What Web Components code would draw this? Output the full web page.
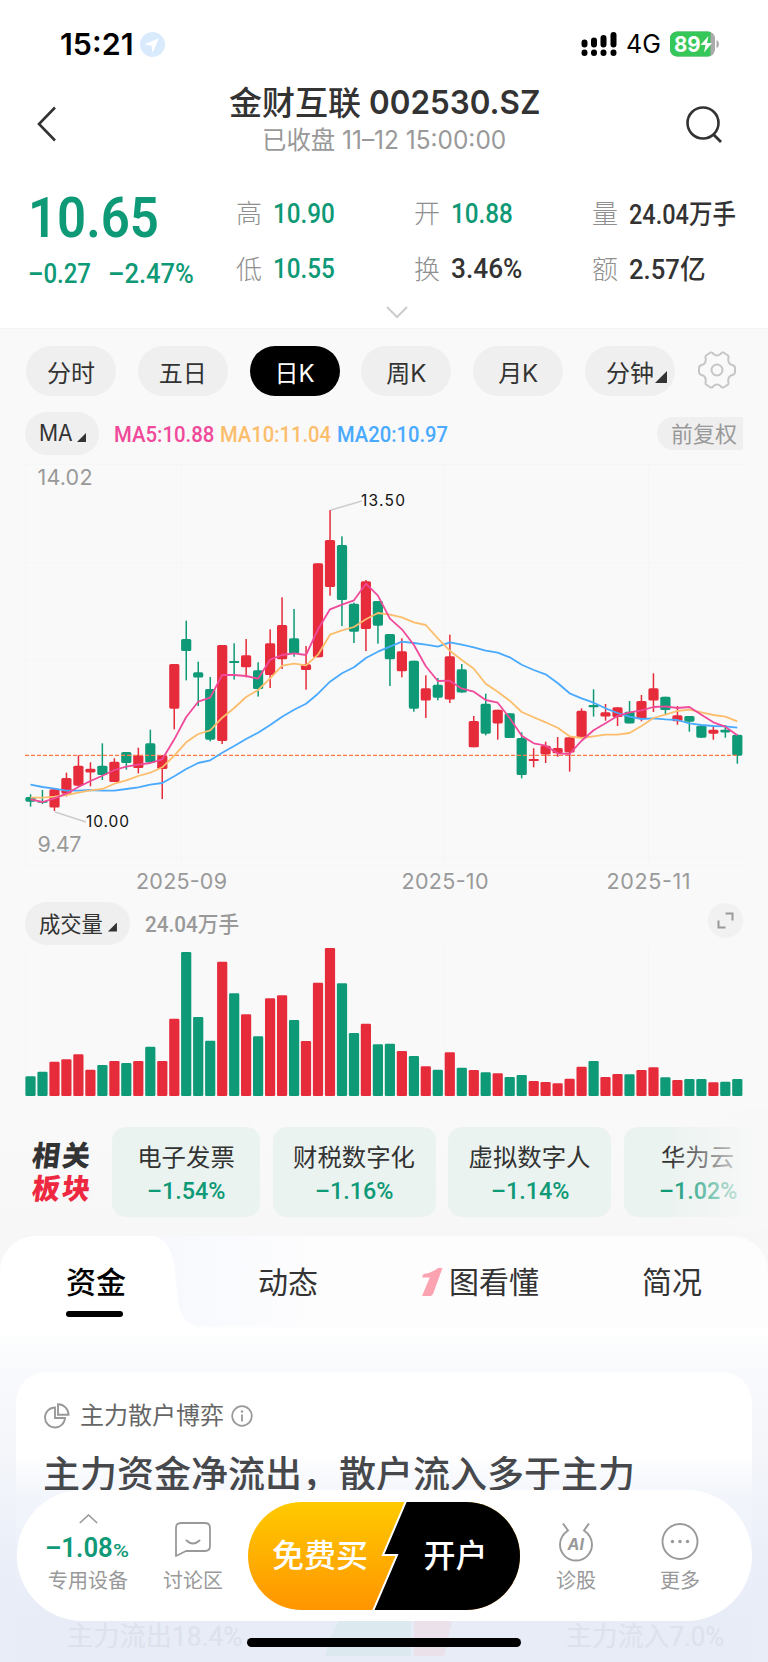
<!DOCTYPE html>
<html lang="zh-CN">
<head>
<meta charset="utf-8">
<title>金财互联 002530.SZ</title>
<style>
html,body{margin:0;padding:0}
body{width:768px;height:1662px;overflow:hidden;background:#f9f9f9;color:#333;font-family:Inter,"Noto Sans CJK SC",sans-serif;
--green:#0e9977;--red:#e62b3b;--grey:#999;--num:Roboto,"Noto Sans CJK SC",sans-serif}
</style>
</head>
<body>
<stock-page></stock-page>
<script>
const define=(name,css,html,setup)=>{
  const t=document.createElement('template');
  t.innerHTML='<style>:host{display:block;box-sizing:border-box}*{box-sizing:border-box}svg{display:block;flex:none}'+css+'</style>'+html;
  customElements.define(name,class extends HTMLElement{
    constructor(){super();this.attachShadow({mode:'open'}).append(t.content.cloneNode(true));}
    connectedCallback(){if(setup)setup(this.shadowRoot,this);}
  });
};

define('stock-page',':host{width:768px;height:1662px;position:relative;overflow:hidden}',`
<status-bar></status-bar>
<page-header></page-header>
<quote-panel></quote-panel>
<period-tabs></period-tabs>
<ma-legend></ma-legend>
<k-chart></k-chart>
<volume-chart></volume-chart>
<sector-list></sector-list>
<section-tabs></section-tabs>
<fund-card></fund-card>
<action-bar></action-bar>`);

define('status-bar',`
:host{height:84px;background:#fff;display:flex;align-items:center;padding:4px 49px 0 60px;color:#000}
.time{font-size:30px;font-weight:600}
.loc{margin-left:6px}
.right{margin-left:auto;display:flex;align-items:center}
.net{font-size:25px;margin:0 9px 0 8px}
.bat{position:relative;width:49px;height:26px}
.bat fit-text{position:absolute;left:4px;top:0;font-size:22px;line-height:26px;font-weight:700;color:#fff}`,`
<fit-text class="time" w="74">15:21</fit-text>
<svg class="loc" width="25" height="25" viewBox="0 0 25 25"><circle cx="12.5" cy="12.5" r="12.5" fill="#d9eafd"/><path d="M18.8 6.2L5.8 11.7c-.8.4-.7 1.2.2 1.3l5.7.4.4 5.7c.1.9.9 1 1.3.2z" fill="#fff"/></svg>
<div class="right">
<svg width="37" height="26" viewBox="0 0 37 26"><g stroke="#000" stroke-width="6" stroke-linecap="round"><path d="M3.5 11.5v2M13 9.500v4M22.500 7v6.500M32.500 4v9.500M3.500 21.500v.5M13 21.500v.5M22.500 21.500v.5M32.500 21.500v.5"/></g></svg>
<fit-text class="net" w="35">4G</fit-text>
<div class="bat"><svg width="49" height="26" viewBox="0 0 49 26"><defs><clipPath id="b"><rect width="45" height="25" y=".5" rx="7"/></clipPath></defs><g clip-path="url(#b)"><rect width="45" height="26" fill="#aaa"/><rect width="40.500" height="26" fill="#35c759"/></g><path d="M46.500 9q2.500 1 2.500 4t-2.500 4z" fill="#aaa"/><path d="M38.500 5l-8 9h5l-1.500 7.500 8-9.500h-5z" fill="#fff"/></svg><fit-text w="27">89</fit-text></div>
</div>`);

define('page-header',`
:host{height:96px;background:#fff;display:grid;grid-template-columns:100px 1fr 100px;padding-top:1px}
.back{margin:21px 0 0 36px}.search{margin:20px 0 0 17px}
.mid{text-align:center}
h1{margin:0;font-size:33px;line-height:36px;font-weight:500;padding-left:1px;display:flex;gap:8px;justify-content:center}
h1 fit-text+fit-text{font-weight:600;font-size:32.500px}
p{margin:2px 0 0;font-size:25px;line-height:34px;color:#999;font-weight:400}
`,`
<svg class="back" width="22" height="36" viewBox="0 0 22 36"><path d="M19 1.500L3 18l16 16.500" fill="none" stroke="#333" stroke-width="2.600"/></svg>
<div class="mid"><h1><fit-text w="132">金财互联</fit-text><fit-text w="171">002530.SZ</fit-text></h1><p><fit-text w="244">已收盘 11–12 15:00:00</fit-text></p></div>
<svg class="search" width="40" height="40" viewBox="0 0 40 40"><circle cx="18" cy="18" r="15.500" fill="none" stroke="#333" stroke-width="2.600"/><path d="M28.500 29.500L36 37" stroke="#333" stroke-width="2.800"/></svg>`);

define('quote-panel',`
:host{height:149px;background:#fff;border-bottom:1px solid #f3f3f3;font-family:var(--num)}
.g{display:grid;grid-template-columns:208px 178px 178px 1fr;grid-template-rows:66px 50px;padding-left:28px;align-items:center}
.big{font-size:56px;line-height:66px;font-weight:500;color:var(--green);height:66px;padding-top:5px}
.big fit-text{font-weight:600}
.chg{display:flex;gap:17px;font-size:27px;font-weight:500;color:var(--green);height:28px;align-items:center;margin-top:6px}
.c{display:flex;align-items:center;font-size:26px;color:#8f8f8f;font-weight:300}
.c>span{margin-top:-3px}
.c fit-text{font-size:27px;font-weight:500;margin-left:11px;color:#333;padding-top:1px}
.c .k{padding-top:0;margin-top:-2px}
.c .gr{color:var(--green)}
.r2{margin-top:-5px}
svg{margin:10px 0 0 386px}`,`
<div class="g">
<div class="big"><fit-text w="131">10.65</fit-text></div>
<div class="c"><span>高</span><fit-text class="gr" w="62">10.90</fit-text></div>
<div class="c"><span>开</span><fit-text class="gr" w="62">10.88</fit-text></div>
<div class="c"><span>量</span><fit-text class="k" w="107">24.04万手</fit-text></div>
<div class="chg"><fit-text w="63">–0.27</fit-text><fit-text w="86">–2.47%</fit-text></div>
<div class="c r2"><span>低</span><fit-text class="gr" w="62">10.55</fit-text></div>
<div class="c r2"><span>换</span><fit-text w="71">3.46%</fit-text></div>
<div class="c r2"><span>额</span><fit-text class="k" w="77">2.57亿</fit-text></div>
</div>
<svg width="22" height="13" viewBox="0 0 22 13"><path d="M1 1l10 10L21 1" fill="none" stroke="#ccc" stroke-width="2"/></svg>`);

define('pill-tab',`
:host{width:90px;height:50px;border-radius:25px;background:#efefef;display:flex;align-items:center;justify-content:center;font-size:24px;color:#333;position:relative;white-space:nowrap}
:host([active]){background:#000;color:#fff}
i{display:none;width:12px;height:12px;background:#333;clip-path:polygon(100% 0,100% 100%,0 100%);position:absolute;right:8px;bottom:13px}
:host([menu]) i{display:block}`,`<slot></slot><i></i>`);

define('period-tabs',`
:host{height:75px;display:flex;align-items:center;gap:21.800px;padding:9px 0 0 26px}
svg{margin-left:1px;margin-top:-2px}`,`
<pill-tab>分时</pill-tab><pill-tab>五日</pill-tab><pill-tab active>日K</pill-tab><pill-tab>周K</pill-tab><pill-tab>月K</pill-tab><pill-tab menu>分钟</pill-tab>
<svg width="38" height="38" viewBox="0 0 38 38"><g fill="none" stroke="#c6c6c6" stroke-width="2" stroke-linejoin="round"><path d="M12.500 1.500Q14.500 1 15.500 3Q19 6 22.500 3Q23.500 1 25.500 1.500L30 4.500Q31 6 30.200 8Q30 13 34.500 14Q37 15 37 17V21Q37 23 34.500 24Q30 25 30.200 30Q31 32 30 33.500L25.500 36.500Q23.500 37 22.500 35Q19 32 15.500 35Q14.500 37 12.500 36.500L8 33.500Q7 32 7.800 30Q8 25 3.500 24Q1 23 1 21V17Q1 15 3.500 14Q8 13 7.800 8Q7 6 8 4.500Z"/><circle cx="19" cy="19" r="5.500"/></g></svg>`);

define('ma-legend',`
:host{height:52px;display:flex;align-items:center;padding:6px 25px 0 25px;font-family:var(--num)}
.p{width:74px;height:43px;border-radius:22px;background:#efefef;display:flex;align-items:center;padding-left:14px;font:23px Inter}
.p i{width:9px;height:9px;background:#333;clip-path:polygon(100% 0,100% 100%,0 100%);margin:9px 0 0 4px}
.m{font-size:22px;font-weight:500;margin-left:6px;padding-top:2px}
.m5{color:#f04a9a;margin-left:15px}.m10{color:#fcbe6c}.m20{color:#4aaaff}
.adj{margin-left:auto;width:86px;height:33px;border-radius:17px 0 0 17px;background:#efefef;color:#999;font:22px/31px "Noto Sans CJK SC";padding-left:14px}`,`
<div class="p"><fit-text w="34">MA</fit-text><i></i></div>
<fit-text class="m m5" w="100">MA5:10.88</fit-text><fit-text class="m m10" w="111">MA10:11.04</fit-text><fit-text class="m m20" w="111">MA20:10.97</fit-text>
<div class="adj">前复权</div>`);

const COLORS='GGRRRRGRGRGRRGGGRGRGRRGRRRGGRGGRGRGRGRGRGGRRRRRGRRGRRGRGGRGG';
const cx=i=>30.5+i*11.98;
const fill=i=>COLORS[i]==='G'?'#0e9977':'#e62b3b';

// Candles: body top, body bottom, wick top, wick bottom, in thirds of a pixel below y=480.
const CANDLES=[[951,965,943,980],[963,968,930,972],[928,983,925,993],[894,941,878,949],[857,917,826,920],[866,877,847,919],[857,885,790,900],[845,906,835,906],[816,849,816,869],[825,864,803,880],[790,848,749,848],[826,867,826,957],[552,686,552,748],[477,513,422,601],[577,593,545,678],[627,779,591,784],[495,783,495,792],[543,549,490,599],[526,562,477,592],[571,627,547,650],[490,585,448,624],[435,538,352,567],[475,521,387,530],[553,570,498,629],[250,532,250,532],[180,321,90,347],[195,360,169,438],[371,455,368,489],[304,447,300,513],[363,437,363,491],[462,538,462,618],[514,574,475,592],[542,686,542,695],[625,662,586,714],[614,653,594,661],[529,659,464,669],[568,638,552,638],[723,802,708,802],[671,761,641,766],[689,730,689,779],[700,774,700,774],[774,885,757,895],[837,843,805,862],[797,823,785,849],[804,820,771,830],[772,818,772,875],[692,771,685,771],[675,682,628,710],[697,710,672,722],[682,711,682,738],[695,730,663,730],[663,717,645,724],[625,662,580,696],[650,690,650,703],[706,724,678,734],[708,725,708,755],[737,773,737,773],[749,761,741,779],[749,757,735,773],[764,827,764,851]];
const MA={
'#f04a9a':[958,966,955,941,921,903,887,870,860,854,849,838,778,711,665,653,585,585,588,596,539,525,520,525,448,388,374,361,311,347,416,448,495,559,603,602,626,635,660,668,714,767,790,797,820,822,782,751,730,708,697,691,681,679,684,681,704,727,740,766],
'#fcbe6c':[953,953,950,945,938,931,927,911,901,888,878,862,827,787,762,751,713,684,651,630,595,557,551,556,524,464,451,441,418,399,404,412,427,435,475,512,540,566,611,635,662,696,712,727,743,769,774,769,764,764,759,738,714,704,693,689,697,705,710,724],
'#4aaaff':[914,921,926,932,932,930,932,932,927,922,914,909,889,867,849,841,818,798,777,758,735,710,689,671,641,605,580,562,534,515,500,485,489,494,500,487,494,502,512,518,532,554,570,583,609,640,655,668,685,699,710,717,715,718,720,730,735,738,739,743]};
define('k-chart',':host{height:443px}text{font-family:Inter,sans-serif}',`<svg width="768" height="443" viewBox="0 456 768 443"></svg>`,root=>{
  const y=v=>(480+v/3).toFixed(1);
  let s='<path d="M25.500 464V865M181.500 464V865M444.500 464V865M648.500 464V865M25 464.500H743M25 562.500H743M25 660.500H743M25 857.500H743M25 865.500H743" stroke="#f6f6f6" fill="none"/>';
  CANDLES.forEach(([a,b,c,d],i)=>{s+=`<rect x="${(cx(i)-.75).toFixed(1)}" y="${y(c)}" width="1.5" height="${((d-c)/3).toFixed(1)}" fill="${fill(i)}"/><rect x="${(cx(i)-5.1).toFixed(1)}" y="${y(a)}" width="10.2" height="${((b-a)/3).toFixed(1)}" rx="${Math.min(1.6,(b-a)/6)}" fill="${fill(i)}"/>`;});
  s+='<path d="M25 755.400H737" stroke="#ff7a4a" stroke-width="1.300" stroke-dasharray="4 2" fill="none"/>';
  for(const c of ['#4aaaff','#fcbe6c','#f04a9a'])s+=`<polyline fill="none" stroke="${c}" stroke-width="1.8" stroke-linejoin="round" points="${MA[c].map((v,i)=>cx(i).toFixed(1)+','+y(v)).join(' ')}"/>`;
  s+='<path d="M331 510L362 501M55 812L86 822" stroke="#ccc" stroke-width="1.500"/>';
  const t=(x,yy,w,z,c,str)=>{s+=`<text x="${x}" y="${yy}" font-size="${z}" textLength="${w}" fill="${c}">${str}</text>`;};
  t(361,506,44,15.5,'#111','13.50');t(86,827,43,15.5,'#111','10.00');
  t(37.5,485,55,21.5,'#999','14.02');t(37.5,852,44,21.5,'#999','9.47');
  t(136,889,91,21.5,'#999','2025-09');t(401.5,889,87,21.5,'#999','2025-10');t(606.5,889,84,21.5,'#999','2025-11');
  root.querySelector('svg').innerHTML=s;
});

const VOL=[649,635,605,598,583,629,615,603,609,603,560,603,476,276,471,542,305,400,463,529,415,406,480,543,368,264,370,519,491,553,551,573,588,619,629,577,623,630,637,640,651,645,663,666,670,656,620,603,651,642,643,630,622,652,660,657,657,667,665,657];
define('volume-chart',`
:host{height:210px}
.h{height:48px;display:flex;align-items:center;padding:1px 25px 0}
.p{width:105px;height:43px;border-radius:22px;background:#efefef;display:flex;align-items:center;padding:0 0 2px 14px;font-size:21.300px;white-space:nowrap}
.p i{width:9px;height:9px;background:#333;clip-path:polygon(100% 0,100% 100%,0 100%);margin:9px 0 0 5px}
.v{font-family:var(--num);font-size:22px;font-weight:500;color:#999;margin:-3px 0 0 15px}
.e{width:35px;height:35px;border-radius:50%;background:#f1f1f1;margin:-7px 0 0 auto;display:grid;place-items:center}`,`
<div class="h"><div class="p">成交量<i></i></div><fit-text class="v" w="94">24.04万手</fit-text><div class="e"><svg width="17" height="17" viewBox="0 0 17 17"><path d="M8.500 1.500h7v7M1.500 8.500v7h7" fill="none" stroke="#999" stroke-width="2"/></svg></div></div>
<svg id="s" width="768" height="162" viewBox="0 947 768 162"></svg>`,root=>{
  root.querySelector('#s').innerHTML='<path d="M444.500 947V1095M648.500 947V1095M25.500 947V1095" stroke="#f6f6f6"/>'+VOL.map((v,i)=>`<rect x="${(cx(i)-5.1).toFixed(1)}" y="${(860+v/3).toFixed(1)}" width="10.2" height="${((708-v)/3).toFixed(1)}" rx="1.3" fill="${fill(i)}"/>`).join('');
});

define('sector-chip',`
:host{flex:none;height:90px;border-radius:14px;background:#ebf3f0;text-align:center;padding-top:14px;font-size:24.400px;line-height:32px;color:#333}
::slotted([slot=p]){display:block!important;margin:2px auto 0;font:500 24.500px/32px Roboto;color:#0e9977}`,`<slot></slot><slot name="p"></slot>`);
define('sector-list',`
:host{height:127px;display:flex;padding:18px 0 0 32px;position:relative;overflow:hidden;background:linear-gradient(#f9f9f9,#f7f7f7)}
.l{width:80px;flex:none;padding-top:12px;font-size:28.500px;font-weight:800;line-height:33px;letter-spacing:2px;color:#333}
.l b{display:block;font-weight:800;transform:skewX(-7deg) scaleX(.98);transform-origin:0 60%}
.l b+b{color:#ed2840}
.row{display:flex;gap:12.500px}
.fade{position:absolute;right:0;top:0;width:98px;height:120px;background:linear-gradient(90deg,#f8f8f800,#f8f8f8 90%)}`,`
<div class="l"><b>相关</b><b>板块</b></div>
<div class="row">
<sector-chip style="width:148px">电子发票<fit-text slot="p" w="78">–1.54%</fit-text></sector-chip>
<sector-chip style="width:163px">财税数字化<fit-text slot="p" w="78">–1.16%</fit-text></sector-chip>
<sector-chip style="width:163px">虚拟数字人<fit-text slot="p" w="78">–1.14%</fit-text></sector-chip>
<sector-chip style="width:148px">华为云<fit-text slot="p" w="78">–1.02%</fit-text></sector-chip>
</div><div class="fade"></div>`);

define('section-tabs',`
:host{height:92px;background:#f7f7f7;position:relative}
.card{height:92px;border-radius:36px 36px 0 0;background:#fdfdfe;overflow:hidden;display:grid;grid-template-columns:192px 192px 192px 192px;font-size:30px;color:#333;text-align:center;line-height:92px;position:relative}
.card>svg{position:absolute;left:0;top:0}
.t{position:relative}
.a{color:#000;font-weight:500}
.a i{position:absolute;left:66px;top:75px;width:57px;height:6px;border-radius:3px;background:#000}
.three{display:flex;align-items:center;justify-content:center;gap:6px}`,`
<div class="card"><svg width="768" height="92"><defs><linearGradient id="g"><stop offset="0" stop-color="#f6f8fd"/><stop offset="1" stop-color="#fdfdfe"/></linearGradient></defs><rect x="150" width="160" height="90" fill="url(#g)"/><path d="M0 0H154Q170 4 174 28L179 70Q182 86 196 90V92H0Z" fill="#fff"/></svg>
<div class="t a">资金<i></i></div><div class="t">动态</div>
<div class="t three"><svg width="22" height="28" viewBox="0 0 22 28"><path d="M17 0H21.500L12 26Q11.300 28 9 28H1L8.800 9.500H1L2.500 6Q11 5 17 0Z" fill="#fba3b1"/></svg><span>图看懂</span></div>
<div class="t">简况</div></div>`);

define('fund-card',`
:host{height:334px;padding:44px 16px 0;background:linear-gradient(#fff,#f7f9fc 45px,#f4f6fa 120px,#e8edf8 260px,#e8edf8);position:relative}
.card{height:290px;border-radius:30px 30px 0 0;background:linear-gradient(#fff 0,#fff 82px,#f2f5fb 125px,#edf1fa 180px,#e7ecf7 240px);padding:27px 28px 0 28px}
.h{display:flex;align-items:center;color:#666;font-size:24px;line-height:33px}
.h span{margin:0 7px 0 10px}
h2{margin:22px 0 0;font-size:37px;line-height:42px;font-weight:500;color:#46484c;white-space:nowrap;margin-left:-1px}
.ghost{display:flex;justify-content:space-between;margin-top:124px;padding:0 0 0 23px;font:500 27px/34px Roboto,"Noto Sans CJK SC";color:#dce1ec;height:40px;position:relative}
.ghost svg{position:absolute;left:240px;top:-8px}
.ghost fit-text{font-weight:400}`,`
<div class="card"><div class="h"><svg width="26" height="26" viewBox="0 0 26 26"><g fill="none" stroke="#999" stroke-width="1.900"><path d="M11 4.500a10 10 0 1 0 10 10.500H11z"/><path d="M14 1.200a10.500 10.500 0 0 1 10.500 10.600H14z"/></g></svg><span>主力散户博弈</span><svg width="22" height="22" viewBox="0 0 22 22"><circle cx="11" cy="11" r="9.800" fill="none" stroke="#999" stroke-width="1.700"/><circle cx="11" cy="6.500" r="1.200" fill="#999"/><path d="M11 9.500v7" stroke="#999" stroke-width="1.800"/></svg></div>
<h2><fit-text w="592">主力资金净流出，散户流入多于主力</fit-text></h2>
<div class="ghost"><svg width="170" height="44" viewBox="0 0 170 44"><path d="M42 44Q50 14 62 0H128V44Z" transform="translate(-1 0)" fill="#dce9ef"/><path d="M130 0H170L160 44H130Z" fill="#eae1ea"/></svg><fit-text w="175">主力流出18.4%</fit-text><fit-text w="158">主力流入7.0%</fit-text></div></div>`);

define('action-item',`
:host{display:flex;flex-direction:column;align-items:center;color:#999;font-size:20px;line-height:26px;width:100px;white-space:nowrap}
.i{height:63px;display:flex;flex-direction:column;align-items:center;justify-content:flex-end;padding-bottom:6px;color:var(--green)}
`,`<div class="i"><slot name="i"></slot></div><slot></slot>`);
define('action-bar',`
:host{position:absolute;left:17px;top:1490px;width:735px;height:172px}
.bar{height:131px;border-radius:66px;background:#fff;display:flex;padding-top:15px;position:relative}
.n{font:600 28px/32px Roboto;display:flex;align-items:baseline;height:30px;margin-left:-3px}
.buy{position:relative;width:272px;height:108px;margin:-3px 0 0 1px;display:grid;grid-template-columns:140px 132px;line-height:108px;font-size:32px;font-weight:500;color:#fff;text-align:center;border-radius:54px;overflow:hidden}
.buy svg{position:absolute;left:0;top:0}.buy span{position:relative}
.home{width:274px;height:9px;border-radius:5px;background:#000;margin:17px 0 0 230px}`,`
<div class="bar">
<action-item style="margin-left:21px;width:100px"><div slot="i"><svg style="display:block;margin:0 auto 8px" width="19" height="10" viewBox="0 0 19 10"><path d="M.8 9l8.700-8 8.700 8" fill="none" stroke="#999" stroke-width="1.600"/></svg><div class="n"><fit-text w="68">–1.08</fit-text><fit-text w="16" style="font-size:19px;font-weight:500">%</fit-text></div></div>专用设备</action-item>
<action-item style="margin-left:5px"><svg slot="i" style="margin-bottom:4px" width="38" height="37" viewBox="0 0 38 37"><path d="M2 35V7Q2 2 7 2H31Q36 2 36 7V25Q36 30 31 30H12Z" fill="none" stroke="#999" stroke-width="1.800" stroke-linejoin="round"/><path d="M12.500 19.500q6.500 6 13 0" fill="none" stroke="#999" stroke-width="2" stroke-linecap="round"/></svg>讨论区</action-item>
<div style="width:4px"></div>
<div class="buy"><svg width="272" height="108"><defs><linearGradient id="y" x2="0" y2="1"><stop stop-color="#ffca00"/><stop offset="1" stop-color="#ff9500"/></linearGradient></defs><rect width="272" height="108" fill="url(#y)"/><path d="M158 -1L135 53H149L125 109H280V-1Z" fill="#000" stroke="#fff" stroke-width="2"/></svg><span style="padding-left:4px">免费买</span><span style="padding-left:3px">开户</span></div>
<action-item style="margin-left:6px;width:100px"><svg slot="i" width="36" height="40" viewBox="0 0 36 40"><path d="M5 1.500L10 8.500Q2 14 2 22.500A16 16 0 0 0 34 22.500Q34 14 26 8.500L31 1.500" fill="none" stroke="#999" stroke-width="1.900"/><text x="9.500" y="28" font-family="Inter,sans-serif" font-size="16" font-style="italic" font-weight="700" fill="#999">AI</text></svg>诊股</action-item>
<action-item style="margin-left:4px"><svg slot="i" width="38" height="39" viewBox="0 0 38 39"><circle cx="19" cy="18.500" r="17.500" fill="none" stroke="#999" stroke-width="1.900"/><g fill="#999"><circle cx="11.500" cy="18.500" r="1.700"/><circle cx="19" cy="18.500" r="1.700"/><circle cx="26.500" cy="18.500" r="1.700"/></g></svg>更多</action-item>
</div><div class="home"></div>`);

// Text squeezed or stretched horizontally to an exact width.
define('fit-text',':host{display:inline-block;white-space:nowrap;flex:none;text-align:left}span{display:inline-block;transform-origin:0 50%}','<span><slot></slot></span>',(root,host)=>{
  const s=root.querySelector('span'),w=+host.getAttribute('w');
  host.style.width=w+'px';
  s.style.transform='none';
  s.style.transform='scaleX('+w/s.offsetWidth+')';
});
</script>
</body>
</html>
